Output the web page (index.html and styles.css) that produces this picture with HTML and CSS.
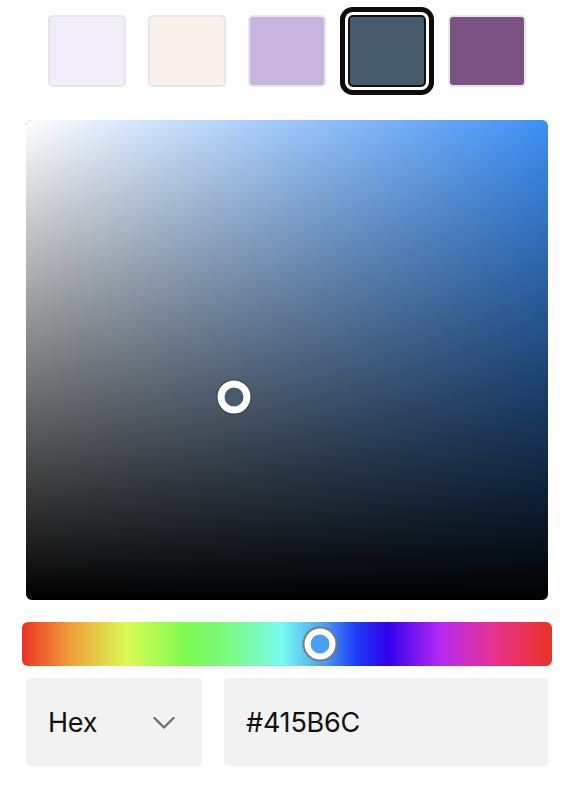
FILE: index.html
```html
<!DOCTYPE html>
<html lang="en">
<head>
<meta charset="utf-8">
<title>Color picker</title>
<link rel="stylesheet" href="styles.css">
</head>
<body>
<div class="app">
  <div class="swatches">
    <div class="swatch sw-1"></div>
    <div class="swatch sw-2"></div>
    <div class="swatch sw-3"></div>
    <div class="swatch sw-4 selected"></div>
    <div class="swatch sw-5"></div>
  </div>

  <div class="sat-area">
    <div class="sat-white"></div>
    <div class="sat-black"></div>
    <div class="sat-knob" style="left: 39.85%; top: 57.7%;"></div>
  </div>

  <div class="hue-bar">
    <div class="hue-knob" style="left: 56.2%;"></div>
  </div>

  <div class="controls">
    <div class="format-select">
      <span class="format-label">Hex</span>
      <svg class="chevron" width="22" height="14" viewBox="0 0 22 14" aria-hidden="true">
        <path d="M1.5 2 L11 11.5 L20.5 2" fill="none" stroke="#6b6b6b" stroke-width="2.2" stroke-linecap="round" stroke-linejoin="round"/>
      </svg>
    </div>
    <div class="hex-input">#415B6C</div>
  </div>
</div>
</body>
</html>
```

FILE: styles.css
```css
* { box-sizing: border-box; }

html, body {
  margin: 0;
  padding: 0;
  background: #ffffff;
}

body {
  font-family: Inter, "Liberation Sans", Arial, sans-serif;
  color: #111111;
  width: 574px;
  height: 798px;
  overflow: hidden;
}

.app {
  padding-top: 15px;
}

.swatches {
  display: flex;
  justify-content: center;
  gap: 22px;
}

.swatch {
  width: 78px;
  height: 72px;
  border-radius: 5px;
  border: 2px solid #e7e5ea;
}

.sw-1 { background: #f1eef9; }
.sw-2 { background: #faf1ec; }
.sw-3 { background: #c8b4de; }
.sw-4 { background: #475a6b; }
.sw-5 { background: #7a5382; }

.swatch.selected {
  border-color: #111111;
  box-shadow: 0 0 0 3px #ffffff, 0 0 0 8px #0d0d0d;
}

.sat-area {
  position: relative;
  margin: 33px 26px 0;
  height: 480px;
  border-radius: 6px;
  overflow: hidden;
  background: #3d8ff5;
}

.sat-white {
  position: absolute;
  inset: 0;
  background: linear-gradient(to right, #ffffff, rgba(255, 255, 255, 0));
}

.sat-black {
  position: absolute;
  inset: 0;
  background: linear-gradient(to bottom, rgba(0, 0, 0, 0), #000000);
}

.sat-knob {
  position: absolute;
  width: 33px;
  height: 33px;
  border-radius: 50%;
  border: 7px solid #ffffff;
  background: #475a6b;
  box-shadow: 0 0 0 1px rgba(0, 0, 0, 0.35);
  transform: translate(-50%, -50%);
}

.hue-bar {
  position: relative;
  margin: 22px 22px 0;
  height: 44px;
  border-radius: 6px;
  background: linear-gradient(to right,
    #ea3323 0%,
    #f09e3a 9%,
    #dafc55 20%,
    #7cfa50 31%,
    #7cfa8a 40%,
    #76fbef 49%,
    #4a9ef3 57%,
    #1c3cf5 63%,
    #3200f0 69%,
    #b52af2 79%,
    #e7318f 89%,
    #ea3323 100%);
}

.hue-knob {
  position: absolute;
  top: 50%;
  width: 31px;
  height: 31px;
  border-radius: 50%;
  border: 6px solid #ffffff;
  background: #4b9ef2;
  box-shadow: 0 0 0 2px #7a7a7a;
  transform: translate(-50%, -50%);
}

.controls {
  display: flex;
  gap: 22px;
  margin: 12px 26px 0;
}

.format-select {
  width: 176px;
  height: 88px;
  background: #f2f2f2;
  border-radius: 4px;
  display: flex;
  align-items: center;
  justify-content: space-between;
  padding: 0 27px 0 22px;
}

.format-label,
.hex-input {
  font-size: 27px;
  line-height: 1;
  letter-spacing: -0.2px;
}

.chevron {
  display: block;
  margin-top: 2px;
}

.hex-input {
  flex: 1;
  height: 88px;
  background: #f2f2f2;
  border-radius: 4px;
  display: flex;
  align-items: center;
  padding-left: 22px;
}
```
